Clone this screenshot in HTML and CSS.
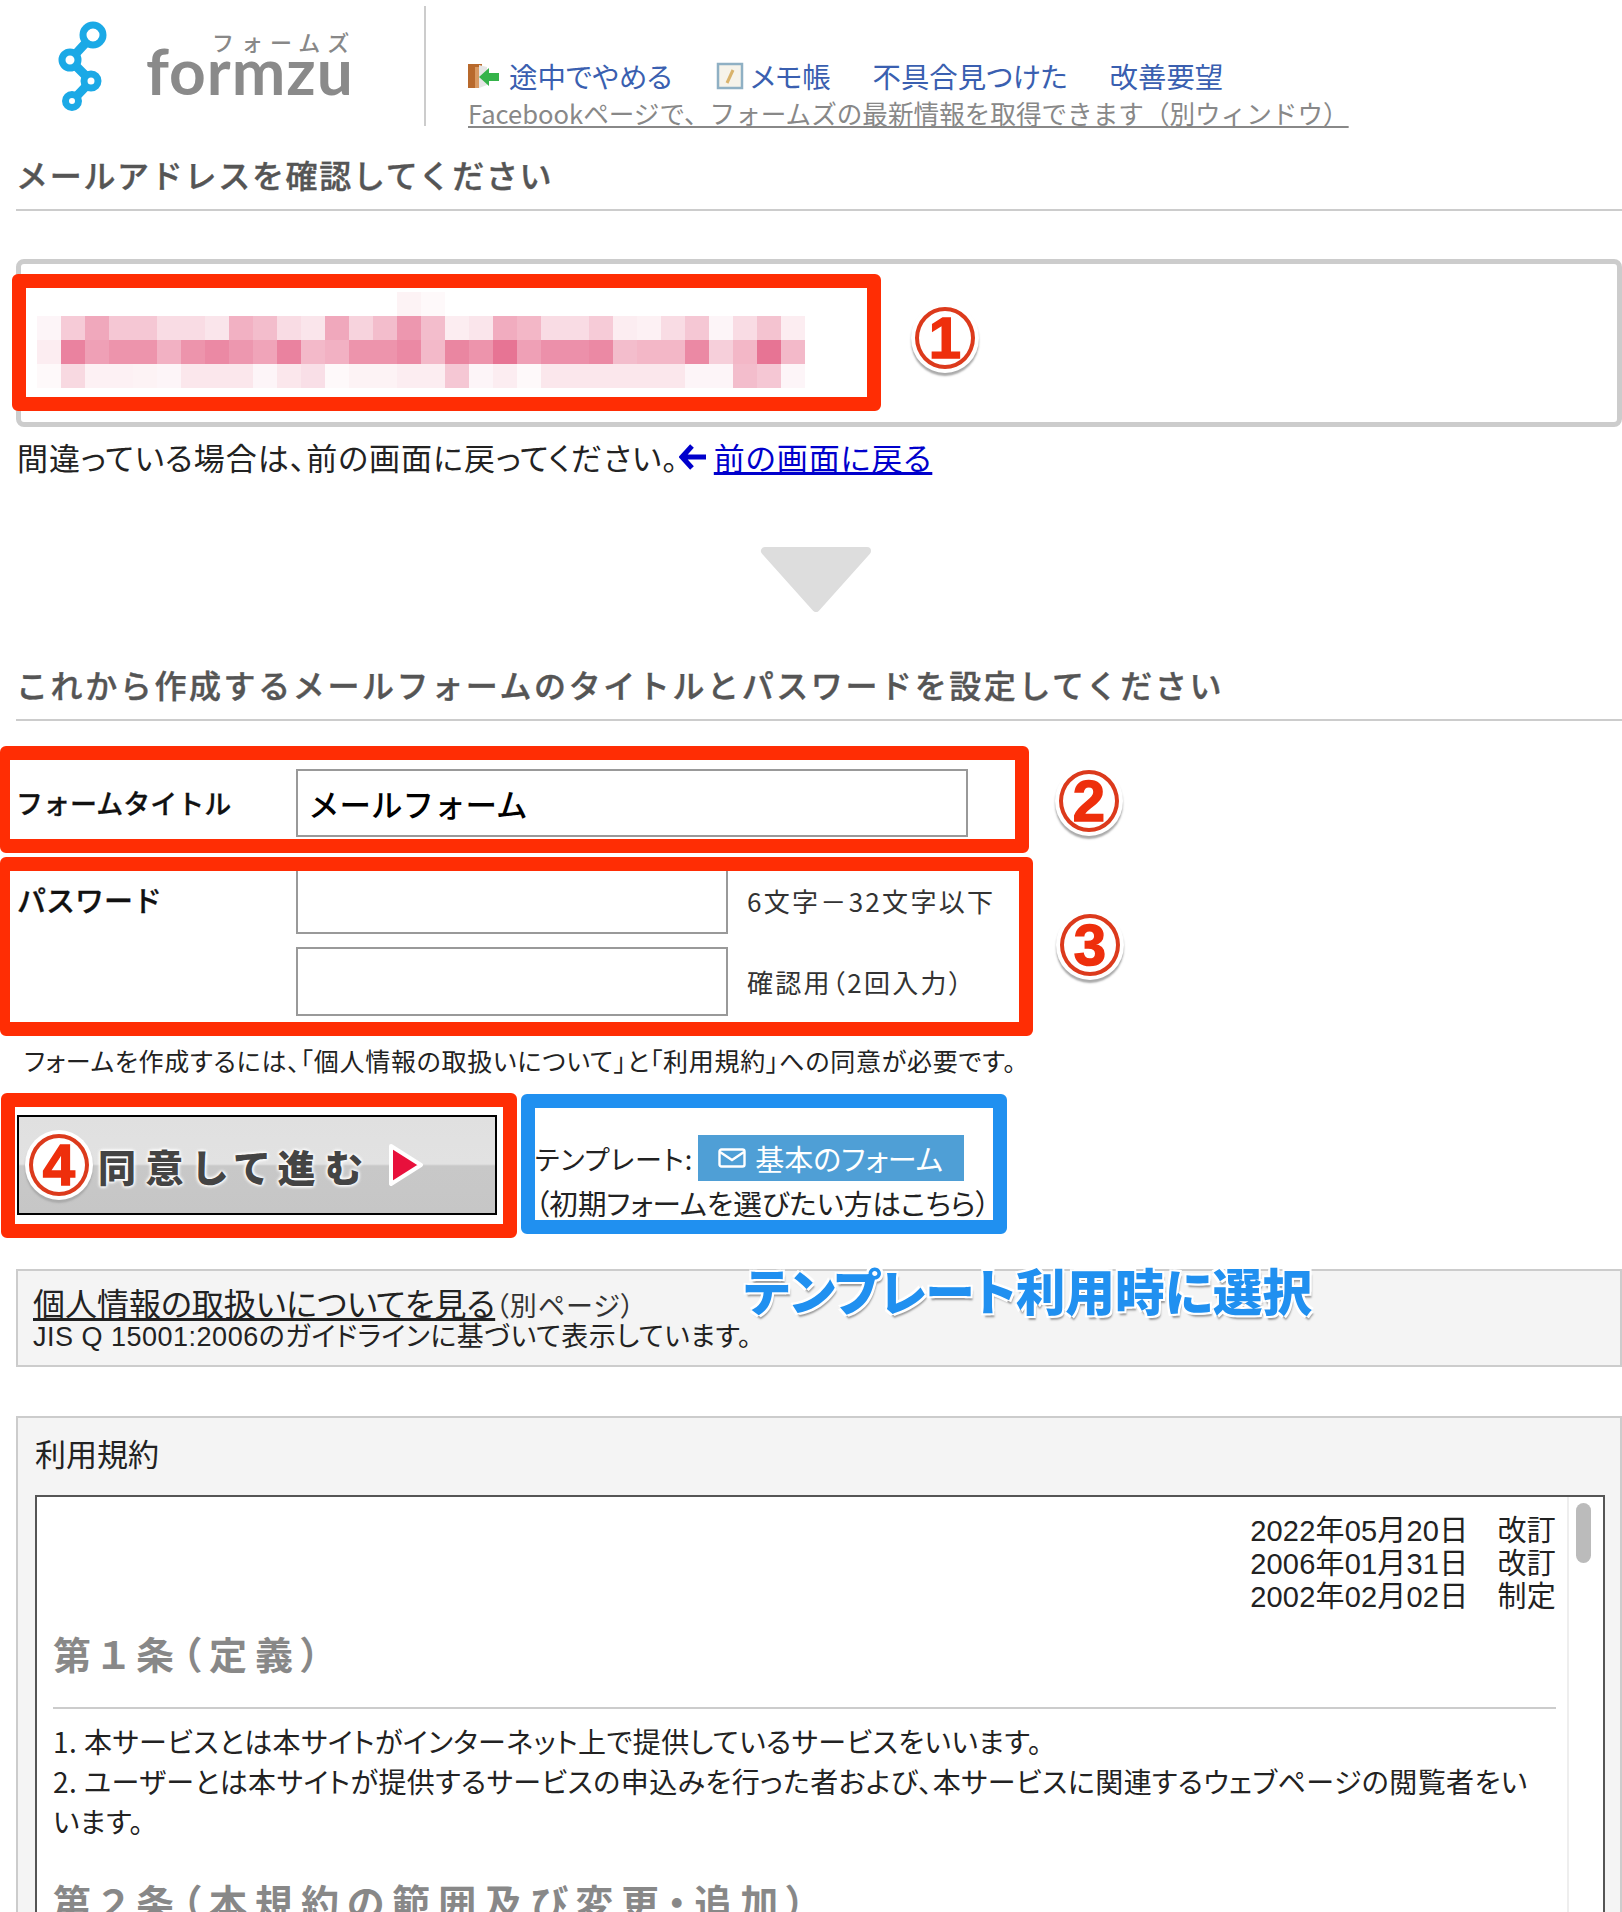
FILE: index.html
```html
<!DOCTYPE html>
<html lang="ja">
<head>
<meta charset="utf-8">
<title>フォームズ</title>
<link rel="stylesheet" href="styles.css">
</head>
<body>
<header class="header">
  <div class="brand">
    <svg class="brand-mark" width="60" height="100" viewBox="0 0 60 100">
      <path class="mark-line" d="M40 23 L17 48 L38 69 L19 89"/>
      <circle class="mark-ring" cx="40" cy="23" r="10"/>
      <circle class="mark-ring" cx="17" cy="48" r="8"/>
      <circle class="mark-ring" cx="38" cy="69" r="7"/>
      <circle class="mark-ring" cx="19" cy="89" r="6.5"/>
    </svg>
    <div class="brand-kana">フォームズ</div>
    <div class="brand-word">formzu</div>
  </div>
  <div class="header-main">
    <nav class="nav">
      <a class="nav-link nav-exit" href="#">
        <svg class="nav-icon" width="32" height="26" viewBox="0 0 32 26">
          <path fill="#b8692c" d="M0 1h14v3H7v21H0z"/>
          <path fill="#d99a63" d="M7 4h4v21H7z"/>
          <path fill="#e6e6e6" d="M11 2l8 2v18l-8 3z"/>
          <path fill="#35b34a" d="M11 14L21 5v5h10v8H21v5z"/>
        </svg>途中でやめる</a>
      <a class="nav-link nav-memo" href="#">
        <svg class="nav-icon" width="28" height="28" viewBox="0 0 28 28">
          <rect x="2" y="2" width="24" height="24" fill="#f6f3ea" stroke="#8fb0c4" stroke-width="2.5"/>
          <path d="M11 21l6-13" stroke="#d9b36c" stroke-width="3" fill="none"/>
        </svg>メモ帳</a>
      <a class="nav-link nav-bug" href="#">不具合見つけた</a>
      <a class="nav-link nav-wish" href="#">改善要望</a>
    </nav>
    <a class="fb-link" href="#">Facebookページで、フォームズの最新情報を取得できます（別ウィンドウ）</a>
  </div>
</header>

<h2 class="section-title first-title">メールアドレスを確認してください</h2>

<div class="mail-box"></div>
<div class="mark-red mark-mail">
  <svg class="mosaic" width="768" height="96" viewBox="0 0 32 4">
    <g fill="#e0446f">
      <rect x="15" y="0" width="1" height="1" fill-opacity=".07"/><rect x="16" y="0" width="1" height="1" fill-opacity=".03"/>
      <rect x="0" y="1" width="1" height="1" fill-opacity=".05"/><rect x="1" y="1" width="1" height="1" fill-opacity=".3"/><rect x="2" y="1" width="1" height="1" fill-opacity=".5"/><rect x="3" y="1" width="1" height="1" fill-opacity=".32"/><rect x="4" y="1" width="1" height="1" fill-opacity=".32"/><rect x="5" y="1" width="1" height="1" fill-opacity=".2"/><rect x="6" y="1" width="1" height="1" fill-opacity=".2"/><rect x="7" y="1" width="1" height="1" fill-opacity=".15"/><rect x="8" y="1" width="1" height="1" fill-opacity=".45"/><rect x="9" y="1" width="1" height="1" fill-opacity=".38"/><rect x="10" y="1" width="1" height="1" fill-opacity=".2"/><rect x="11" y="1" width="1" height="1" fill-opacity=".15"/><rect x="12" y="1" width="1" height="1" fill-opacity=".5"/><rect x="13" y="1" width="1" height="1" fill-opacity=".25"/><rect x="14" y="1" width="1" height="1" fill-opacity=".38"/><rect x="15" y="1" width="1" height="1" fill-opacity=".6"/><rect x="16" y="1" width="1" height="1" fill-opacity=".38"/><rect x="17" y="1" width="1" height="1" fill-opacity=".1"/><rect x="18" y="1" width="1" height="1" fill-opacity=".15"/><rect x="19" y="1" width="1" height="1" fill-opacity=".48"/><rect x="20" y="1" width="1" height="1" fill-opacity=".42"/><rect x="21" y="1" width="1" height="1" fill-opacity=".2"/><rect x="22" y="1" width="1" height="1" fill-opacity=".2"/><rect x="23" y="1" width="1" height="1" fill-opacity=".3"/><rect x="24" y="1" width="1" height="1" fill-opacity=".1"/><rect x="25" y="1" width="1" height="1" fill-opacity=".08"/><rect x="26" y="1" width="1" height="1" fill-opacity=".2"/><rect x="27" y="1" width="1" height="1" fill-opacity=".32"/><rect x="28" y="1" width="1" height="1" fill-opacity=".05"/><rect x="29" y="1" width="1" height="1" fill-opacity=".2"/><rect x="30" y="1" width="1" height="1" fill-opacity=".35"/><rect x="31" y="1" width="1" height="1" fill-opacity=".1"/>
      <rect x="0" y="2" width="1" height="1" fill-opacity=".1"/><rect x="1" y="2" width="1" height="1" fill-opacity=".72"/><rect x="2" y="2" width="1" height="1" fill-opacity=".55"/><rect x="3" y="2" width="1" height="1" fill-opacity=".62"/><rect x="4" y="2" width="1" height="1" fill-opacity=".62"/><rect x="5" y="2" width="1" height="1" fill-opacity=".45"/><rect x="6" y="2" width="1" height="1" fill-opacity=".62"/><rect x="7" y="2" width="1" height="1" fill-opacity=".68"/><rect x="8" y="2" width="1" height="1" fill-opacity=".6"/><rect x="9" y="2" width="1" height="1" fill-opacity=".52"/><rect x="10" y="2" width="1" height="1" fill-opacity=".72"/><rect x="11" y="2" width="1" height="1" fill-opacity=".4"/><rect x="12" y="2" width="1" height="1" fill-opacity=".45"/><rect x="13" y="2" width="1" height="1" fill-opacity=".62"/><rect x="14" y="2" width="1" height="1" fill-opacity=".62"/><rect x="15" y="2" width="1" height="1" fill-opacity=".68"/><rect x="16" y="2" width="1" height="1" fill-opacity=".4"/><rect x="17" y="2" width="1" height="1" fill-opacity=".7"/><rect x="18" y="2" width="1" height="1" fill-opacity=".62"/><rect x="19" y="2" width="1" height="1" fill-opacity=".8"/><rect x="20" y="2" width="1" height="1" fill-opacity=".55"/><rect x="21" y="2" width="1" height="1" fill-opacity=".64"/><rect x="22" y="2" width="1" height="1" fill-opacity=".64"/><rect x="23" y="2" width="1" height="1" fill-opacity=".68"/><rect x="24" y="2" width="1" height="1" fill-opacity=".38"/><rect x="25" y="2" width="1" height="1" fill-opacity=".42"/><rect x="26" y="2" width="1" height="1" fill-opacity=".42"/><rect x="27" y="2" width="1" height="1" fill-opacity=".68"/><rect x="28" y="2" width="1" height="1" fill-opacity=".28"/><rect x="29" y="2" width="1" height="1" fill-opacity=".42"/><rect x="30" y="2" width="1" height="1" fill-opacity=".8"/><rect x="31" y="2" width="1" height="1" fill-opacity=".4"/>
      <rect x="0" y="3" width="1" height="1" fill-opacity=".03"/><rect x="1" y="3" width="1" height="1" fill-opacity=".22"/><rect x="2" y="3" width="1" height="1" fill-opacity=".08"/><rect x="3" y="3" width="1" height="1" fill-opacity=".08"/><rect x="4" y="3" width="1" height="1" fill-opacity=".07"/><rect x="5" y="3" width="1" height="1" fill-opacity=".05"/><rect x="6" y="3" width="1" height="1" fill-opacity=".14"/><rect x="7" y="3" width="1" height="1" fill-opacity=".14"/><rect x="8" y="3" width="1" height="1" fill-opacity=".14"/><rect x="9" y="3" width="1" height="1" fill-opacity=".05"/><rect x="10" y="3" width="1" height="1" fill-opacity=".14"/><rect x="11" y="3" width="1" height="1" fill-opacity=".18"/><rect x="12" y="3" width="1" height="1" fill-opacity=".03"/><rect x="13" y="3" width="1" height="1" fill-opacity=".07"/><rect x="14" y="3" width="1" height="1" fill-opacity=".07"/><rect x="15" y="3" width="1" height="1" fill-opacity=".1"/><rect x="16" y="3" width="1" height="1" fill-opacity=".1"/><rect x="17" y="3" width="1" height="1" fill-opacity=".32"/><rect x="18" y="3" width="1" height="1" fill-opacity=".05"/><rect x="19" y="3" width="1" height="1" fill-opacity=".1"/><rect x="20" y="3" width="1" height="1" fill-opacity=".03"/><rect x="21" y="3" width="1" height="1" fill-opacity=".14"/><rect x="22" y="3" width="1" height="1" fill-opacity=".14"/><rect x="23" y="3" width="1" height="1" fill-opacity=".14"/><rect x="24" y="3" width="1" height="1" fill-opacity=".14"/><rect x="25" y="3" width="1" height="1" fill-opacity=".14"/><rect x="26" y="3" width="1" height="1" fill-opacity=".14"/><rect x="27" y="3" width="1" height="1" fill-opacity=".05"/><rect x="28" y="3" width="1" height="1" fill-opacity=".05"/><rect x="29" y="3" width="1" height="1" fill-opacity=".38"/><rect x="30" y="3" width="1" height="1" fill-opacity=".32"/><rect x="31" y="3" width="1" height="1" fill-opacity=".05"/>
    </g>
  </svg>
</div>
<div class="badge badge-1">1</div>

<p class="back-note">間違っている場合は、前の画面に戻ってください。<svg class="back-arrow" width="28" height="26" viewBox="0 0 28 26"><path d="M13 2 L3 13 L13 24 M3 13 H27" fill="none" stroke="#0000cc" stroke-width="5"/></svg><a class="back-link" href="#">前の画面に戻る</a></p>

<svg class="down-arrow" width="112" height="65" viewBox="0 0 112 65"><path d="M5 4 H107 L56 61 Z"/></svg>

<h2 class="section-title second-title">これから作成するメールフォームのタイトルとパスワードを設定してください</h2>

<div class="mark-red mark-title">
  <label class="field-label field-label-title">フォームタイトル</label>
  <input class="field field-title" type="text" value="メールフォーム">
</div>
<div class="badge badge-2">2</div>

<div class="mark-red mark-pass">
  <label class="field-label field-label-pass">パスワード</label>
  <div class="pass-fields">
    <div class="pass-row">
      <input class="field field-pass field-pass-first" type="text">
      <span class="pass-hint pass-hint-first">6文字－32文字以下</span>
    </div>
    <div class="pass-row pass-row-second">
      <input class="field field-pass" type="text">
      <span class="pass-hint">確認用（2回入力）</span>
    </div>
  </div>
</div>
<div class="badge badge-3">3</div>

<p class="consent">フォームを作成するには、「個人情報の取扱いについて」と「利用規約」への同意が必要です。</p>

<div class="action-row">
  <div class="mark-red mark-submit">
    <button class="submit" type="button"><span class="submit-label">同意して進む</span><svg class="submit-arrow" width="36" height="42" viewBox="0 0 36 42"><path d="M3 2 L33 21 L3 40 Z"/></svg></button>
  </div>
  <div class="mark-blue">
    <div class="template-row">テンプレート:<a class="template-btn" href="#"><svg width="28" height="20" viewBox="0 0 28 20"><rect x="1.5" y="1.5" width="25" height="17" rx="2" fill="none" stroke="#fff" stroke-width="2.4"/><path d="M2 4 L14 12 L26 4" fill="none" stroke="#fff" stroke-width="2.4"/></svg>基本のフォーム</a></div>
    <div class="template-note">（初期フォームを選びたい方はこちら）</div>
  </div>
</div>
<div class="badge badge-4">4</div>

<div class="panel privacy">
  <div class="privacy-line"><a class="privacy-link" href="#">個人情報の取扱いについてを見る</a><span class="privacy-sub">（別ページ）</span></div>
  <div class="privacy-jis">JIS Q 15001:2006のガイドラインに基づいて表示しています。</div>
</div>
<div class="callout">テンプレート利用時に選択</div>

<section class="panel terms">
  <div class="terms-title">利用規約</div>
  <div class="terms-scroll">
    <div class="terms-body">
      <div class="terms-dates">2022年05月20日　改訂<br>2006年01月31日　改訂<br>2002年02月02日　制定</div>
      <h3 class="terms-head head-1">第１条（定義）</h3>
      <p class="terms-item">1. 本サービスとは本サイトがインターネット上で提供しているサービスをいいます。</p>
      <p class="terms-item">2. ユーザーとは本サイトが提供するサービスの申込みを行った者および、本サービスに関連するウェブページの閲覧者をいいます。</p>
      <h3 class="terms-head head-2">第２条（本規約の範囲及び変更・追加）</h3>
    </div>
    <div class="terms-track"><div class="terms-thumb"></div></div>
  </div>
</section>
</body>
</html>
```

FILE: styles.css
```css
* { box-sizing: border-box; }
html, body { margin: 0; padding: 0; height: 1912px; overflow: hidden; background: #fff; }
body {
  position: relative;
  font-family: "Noto Sans CJK JP", "Liberation Sans", sans-serif;
  font-feature-settings: "palt";
  color: #222;
}
p, h2, h3 { margin: 0; }

/* header */
.header { display: flex; height: 130px; }
.brand { position: relative; width: 426px; height: 120px; margin-top: 6px; border-right: 2px solid #ccc; flex: none; }
.brand-mark { position: absolute; left: 53px; top: 6px; }
.mark-line { fill: none; stroke: #1ba9e6; stroke-width: 9; }
.mark-ring { fill: #fff; stroke: #1ba9e6; stroke-width: 7; }
.brand-kana { position: absolute; left: 212px; top: 20px; font-size: 22px; line-height: 30px; letter-spacing: 7px; color: #888; font-weight: 500; font-feature-settings: normal; }
.brand-word { position: absolute; left: 146px; top: 23px; font-family: Lato, sans-serif; font-weight: 700; font-size: 64px; line-height: 84px; letter-spacing: 1px; color: #8a8a8a; }
.header-main { margin-left: 42px; padding-top: 54px; }
.nav { display: flex; height: 44px; align-items: center; font-size: 28.4px; }
.nav-link { display: flex; align-items: center; color: #3a5fb0; text-decoration: none; white-space: nowrap; line-height: 44px; }
.nav-exit { margin-right: 44px; }
.nav-memo { margin-right: 42px; }
.nav-bug { margin-right: 42px; }
.nav-exit .nav-icon { margin-right: 9px; }
.nav-memo .nav-icon { margin-right: 6px; }
.fb-link { display: block; font-size: 25.6px; line-height: 30px; height: 30px; color: #888; text-decoration: underline; text-underline-offset: 2px; white-space: nowrap; font-feature-settings: normal; }

/* section titles */
.section-title { margin-left: 16px; border-bottom: 2px solid #ccc; font-size: 32px; line-height: 44px; color: #555; font-weight: 500; white-space: nowrap; font-feature-settings: normal; -webkit-text-stroke: .4px #555; }
.first-title { margin-top: 22px; padding-bottom: 13px; letter-spacing: 1.7px; }
.second-title { margin-top: 50px; padding-bottom: 13px; letter-spacing: 2.6px; }

/* mail confirmation */
.mail-box { margin: 48px 0 0 16px; height: 168px; border: 5px solid #ccc; border-radius: 8px; }
.mark-red { border: 14px solid #ff2d04; border-radius: 6px; background: #fff; }
.mark-mail { position: absolute; left: 12px; top: 274px; width: 869px; height: 137px; }
.mosaic { position: absolute; left: 11px; top: 4px; opacity: .92; }

.badge {
  position: absolute; width: 60px; height: 62px; border-radius: 50%;
  border: 4px solid #dc3a1c; background: #fff;
  box-shadow: 0 0 0 4px #fff, 0 3px 2px 4px #aaa;
  font-family: "Liberation Sans", sans-serif; font-weight: 700; font-size: 58px; line-height: 54px; text-align: center;
  color: #ee2f0c; -webkit-text-stroke: 1.5px #ee2f0c;
}
.badge-1 { left: 915px; top: 307px; }
.badge-2 { left: 1059px; top: 770px; }
.badge-3 { left: 1060px; top: 914px; }
.badge-4 { left: 29px; top: 1134px; }

.back-note { margin: 10px 0 0 17px; font-size: 31px; letter-spacing: 1px; line-height: 40px; height: 40px; display: flex; align-items: center; white-space: nowrap; }
.back-arrow { margin: 0 7px 0 0; }
.back-link { color: #0000cc; }

.down-arrow { display: block; margin: 70px 0 0 760px; }
.down-arrow path { fill: #ddd; stroke: #ddd; stroke-width: 8; stroke-linejoin: round; }

/* form */
.mark-title { display: flex; align-items: center; margin-top: 25px; width: 1029px; height: 107px; border-left-width: 10px; }
.field-label { font-weight: 500; color: #111; white-space: nowrap; font-feature-settings: normal; -webkit-text-stroke: .3px #111; }
.field-label-title { width: 286px; padding-left: 6px; padding-top: 5px; font-size: 27px; }
.field { display: block; border: 2px solid #999; background: #fff; padding: 0 10px; margin: 0; border-radius: 0; font: inherit; }
.field-title { width: 672px; height: 68px; font-size: 31.5px; font-weight: 500; color: #000; margin-top: 7px; font-feature-settings: normal; }
.mark-pass { display: flex; margin-top: 4px; width: 1033px; height: 179px; border-left-width: 10px; }
.field-label-pass { width: 286px; padding-left: 7px; line-height: 44px; padding-top: 6px; font-size: 29px; }
.pass-row { display: flex; align-items: center; }
.pass-row-second { margin-top: 13px; }
.field-pass { width: 432px; height: 63px; }
.field-pass-first { border-top: 0; }
.pass-row-second .field-pass { height: 69px; }
.pass-hint { margin-left: 19px; font-size: 26px; letter-spacing: 2.3px; color: #333; white-space: nowrap; }
.pass-hint-first { margin-bottom: 4px; }

.consent { margin: 3px 0 0 24px; font-size: 25px; letter-spacing: .75px; line-height: 42px; height: 42px; color: #222; white-space: nowrap; }

.action-row { display: flex; align-items: flex-start; gap: 4px; margin: 12px 0 0 1px; }
.mark-submit { width: 516px; height: 145px; padding: 8px 0 0 2px; }
.submit { display: flex; align-items: center; width: 480px; height: 100px; padding: 0 0 0 79px; border: 2px solid #000; border-radius: 0; background: linear-gradient(#e0e0e0 0, #e2e2e2 49%, #c8c8c8 51%, #c6c6c6 100%); font: inherit; }
.submit-label { font-size: 38px; font-weight: 900; letter-spacing: 9.5px; color: #444; text-shadow: 0 0 3px #fff, 0 0 3px #fff, 0 0 4px #fff, 0 0 4px #fff; margin-right: 16px; }
.submit-arrow path { fill: #e8103c; stroke: #fff; stroke-width: 4; stroke-linejoin: round; }
.mark-blue { width: 486px; height: 140px; margin-top: 1px; border: 14px solid #2090f0; border-radius: 6px; background: #fff; padding: 27px 0 0 0; font-size: 28.6px; color: #222; white-space: nowrap; }
.template-row { display: flex; align-items: center; height: 46px; font-size: 27px; letter-spacing: 1px; }
.template-btn { display: flex; align-items: center; width: 266px; height: 46px; margin-left: 5px; padding-left: 20px; background: #4f9fd6; color: #fff; text-decoration: none; font-size: 29px; letter-spacing: 0; }
.template-btn svg { margin-right: 9px; }
.template-note { margin-top: 4px; line-height: 36px; height: 36px; }

/* panels */
.panel { margin-left: 16px; background: #f4f4f4; border: 2px solid #ccc; }
.privacy { margin-top: 31px; height: 98px; padding: 12px 0 0 15px; }
.privacy-line { line-height: 38px; height: 38px; font-size: 27px; letter-spacing: 1px; color: #333; white-space: nowrap; }
.privacy-link { font-size: 32px; letter-spacing: 0; color: #222; text-decoration: underline; }
.privacy-jis { font-size: 27px; letter-spacing: .5px; line-height: 32px; color: #222; white-space: nowrap; font-family: "Liberation Sans", "Noto Sans CJK JP", sans-serif; }
.callout {
  position: absolute; left: 744px; top: 1260px; font-size: 49.7px; line-height: 58px; font-weight: 900; color: #2090f0; white-space: nowrap;
  text-shadow: 2px 2px 0 #fff, -2px -2px 0 #fff, 2px -2px 0 #fff, -2px 2px 0 #fff, 2px 4px 2px #999;
}
.terms { margin-top: 49px; height: 520px; padding: 0 0 0 17px; }
.terms-title { font-size: 31px; line-height: 40px; height: 77px; padding-top: 15px; color: #222; font-feature-settings: normal; }
.terms-scroll { display: flex; width: 1570px; height: 430px; background: #fff; border: 2px solid #555; border-bottom: 0; }
.terms-body { flex: 1; padding: 18px 11px 0 16px; min-width: 0; }
.terms-dates { text-align: right; font-size: 29px; letter-spacing: .2px; line-height: 33px; color: #222; font-family: "Liberation Sans", "Noto Sans CJK JP", sans-serif; }
.terms-head { color: #888; font-size: 38px; font-weight: 700; line-height: 44px; white-space: nowrap; }
.head-1 { margin-top: 17px; padding-bottom: 32px; border-bottom: 2px solid #ccc; letter-spacing: 8px; margin-bottom: 12px; }
.head-2 { margin-top: 38px; letter-spacing: 8px; }
.terms-item { font-size: 28px; letter-spacing: .45px; line-height: 40px; color: #222; padding-right: 7px; }
.terms-track { width: 36px; flex: none; padding: 6px 0 0 7px; border-left: 2px solid #eee; }
.terms-thumb { width: 15px; height: 60px; border-radius: 8px; background: #bbb; }
```
